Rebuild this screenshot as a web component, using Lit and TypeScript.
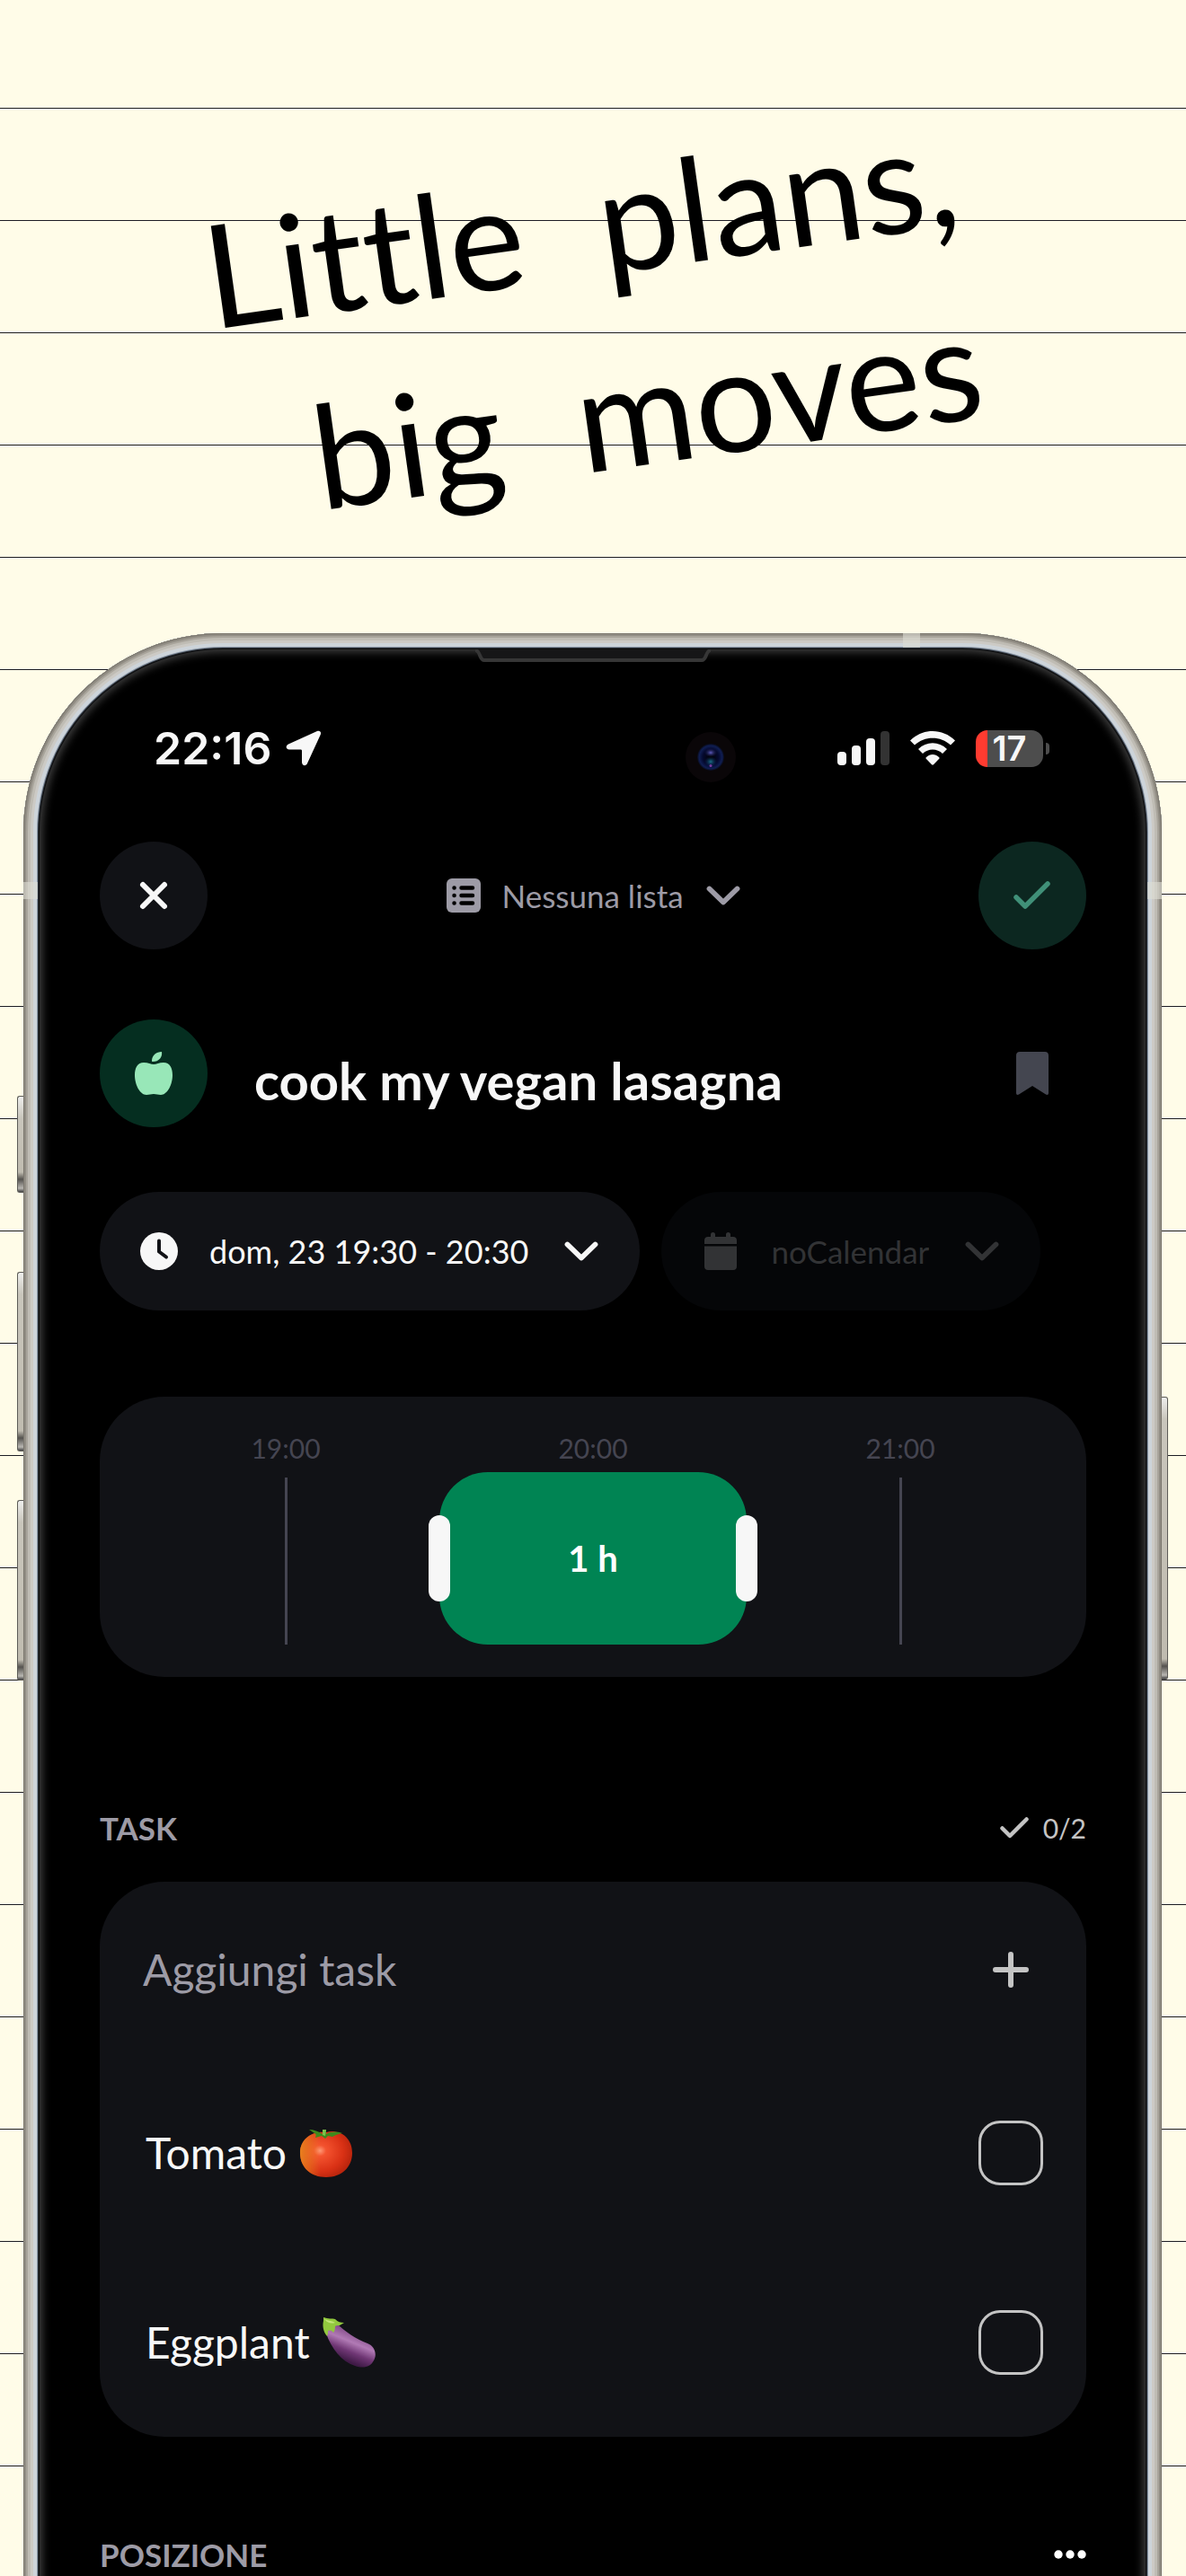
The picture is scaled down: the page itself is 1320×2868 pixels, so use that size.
import { LitElement, css, html, svg } from 'lit';
import { customElement, state } from 'lit/decorators.js';

interface Task {
  id: string;
  label: string;
  picture: 'tomato' | 'eggplant';
  done: boolean;
}

const chevron = html`
  <svg class="chevron" viewBox="0 0 38 22" aria-hidden="true">
    <path d="M3.500 3.500 19 18.500 34.500 3.500" fill="none" stroke="currentColor" stroke-width="5.800" stroke-linecap="round" stroke-linejoin="round" />
  </svg>
`;

const pictures = {
  tomato: svg`
    <defs>
      <radialGradient id="skin" cx=".38" cy=".42" r=".75">
        <stop offset="0" stop-color="#ff9a78" />
        <stop offset=".16" stop-color="#f4532f" />
        <stop offset=".6" stop-color="#d93115" />
        <stop offset="1" stop-color="#a51d08" />
      </radialGradient>
      <linearGradient id="glow" x1="0" x2="1">
        <stop offset="0" stop-color="#e8871e" stop-opacity=".9" />
        <stop offset=".4" stop-color="#e8871e" stop-opacity="0" />
      </linearGradient>
    </defs>
    <path d="M30 5C44 1 59 10 59 28c0 16-12 27-29 27S1 44 1 28C1 12 15 3 30 5Z" fill="url(#skin)" />
    <path d="M30 5C44 1 59 10 59 28c0 16-12 27-29 27S1 44 1 28C1 12 15 3 30 5Z" fill="url(#glow)" />
    <path d="M11 2c5 0 11 2 15 5l1-5h3v5c6-3 12-3 18-1-5 1-8 2-11 4l-5-1-3 3-4-3-7 2c1-3 1-4-1-5Z" fill="#3f8a1c" />
    <path d="M26 2h4l-1 7-3-1Z" fill="#7cc24a" />
  `,
  eggplant: svg`
    <defs>
      <linearGradient id="peel" x1=".7" y1=".2" x2=".4" y2=".85">
        <stop offset="0" stop-color="#7a4380" />
        <stop offset=".4" stop-color="#b17ab5" />
        <stop offset=".7" stop-color="#6f3674" />
        <stop offset="1" stop-color="#3f1a46" />
      </linearGradient>
    </defs>
    <path d="M16 7c9 9 21 17 34 22 8 3 11 12 7 19-4 8-12 9-21 6C21 49 10 35 4 18 3 12 10 4 16 7Z" fill="url(#peel)" />
    <path d="M1 0c5 2 10 1 13 2 3 3 6 4 10 4l-5 3c-3 0-4 0-5 1 0 4-1 6-2 7-2-3-4-3-6-2 0 2 0 4-1 6C0 15 0 8 1 4Z" fill="#92c83e" />
    <path d="M2 2c5 2 9 2 12 4-4 1-8 1-12-4Z" fill="#c3e67a" />
  `,
};

@customElement('app-root')
export class AppRoot extends LitElement {
  static styles = css`
    :host {
      display: block;
      font-family: Lato, 'Open Sans', sans-serif;
      color: #f7f7f7;
    }
    * {
      box-sizing: border-box;
    }
    button,
    input,
    select {
      appearance: none;
      margin: 0;
      padding: 0;
      border: 0;
      background: none;
      color: inherit;
      font: inherit;
      cursor: pointer;
    }
    svg {
      display: block;
      flex: none;
    }
    .page {
      display: flex;
      flex-direction: column;
      min-height: 100vh;
      overflow: hidden;
      background: #fffce8 linear-gradient(#fffce8 120px, #1c1c24 120px, #1c1c24 121px, #fffce8 121px) 0 0 / 100% 125px;
    }

    /* headline */
    .headline {
      display: flex;
      flex-direction: column;
      align-items: center;
      height: 705px;
      margin: 0;
      padding-top: 138px;
      color: #000;
      font: 400 160px/216px Lato, sans-serif;
      font-variant-ligatures: none;
      transform: rotate(-8deg);
    }
    .line {
      display: flex;
      gap: 84px;
    }
    .line + .line {
      padding-left: 90px;
    }

    /* device */
    .device {
      position: relative;
      flex: 1;
      display: flex;
      flex-direction: column;
      margin: 0 27px -40px 26px;
    }
    .side {
      position: absolute;
      right: 100%;
      width: 7px;
      border: 1px solid #5d5c58;
      border-right: 0;
      border-radius: 3px 0 0 3px;
      background: linear-gradient(#eeeeec, #c9c6bc 24px, #c0bcb0 calc(100% - 22px), #55534f calc(100% - 14px), #b9b7b2 calc(100% - 4px), #444);
    }
    .side.action {
      top: 515px;
      height: 108px;
    }
    .side.up {
      top: 711px;
      height: 200px;
    }
    .side.down {
      top: 965px;
      height: 201px;
    }
    .side.power {
      top: 850px;
      right: auto;
      left: 100%;
      height: 315px;
      transform: scaleX(-1);
    }
    .body {
      flex: 1;
      padding: 104px 84px 40px 85px;
      border-radius: 222px 222px 0 0;
      background: #000;
      box-shadow:
        inset 0 0 0 1px #7c786f,
        inset 0 0 0 3px #918d84,
        inset 0 0 0 5px #a8a49b,
        inset 0 0 0 8px #bfbcb4,
        inset 0 0 0 11px #cccac5,
        inset 0 0 0 15px #cdd4da,
        inset 0 0 0 16px #8b98a8,
        inset 0 0 0 17px #2b3037,
        inset 0 0 0 18px #0c0d0f,
        inset 0 0 10px 21px #404040;
    }
    .band {
      position: absolute;
      background: #deded4;
      opacity: 0.6;
    }
    .band.left {
      top: 277px;
      left: 0;
      width: 16px;
      height: 19px;
    }
    .band.right {
      top: 277px;
      right: 0;
      width: 16px;
      height: 19px;
    }
    .band.top {
      top: 0;
      right: 269px;
      width: 19px;
      height: 16px;
    }
    .speaker {
      position: absolute;
      top: 18px;
      left: 50%;
      width: 262px;
      height: 16px;
      margin-left: -131px;
    }
    .camera {
      position: absolute;
      top: 109px;
      left: calc(50% + 102px);
      width: 58px;
      height: 58px;
    }

    /* status bar */
    .status {
      display: flex;
      align-items: center;
      height: 48px;
      padding: 0 48px 0 60px;
      font-family: Inter, sans-serif;
      font-weight: 600;
    }
    .time {
      font-size: 50px;
      line-height: 48px;
    }
    .arrow {
      width: 40px;
      height: 40px;
      margin-left: 16px;
    }
    .signal {
      width: 59px;
      height: 38px;
      margin-left: auto;
    }
    .wifi {
      width: 50px;
      height: 38px;
      margin-left: 22px;
    }
    .battery {
      position: relative;
      display: flex;
      align-items: center;
      justify-content: center;
      width: 75px;
      height: 41px;
      margin-left: 23px;
      border-radius: 13px;
      background: linear-gradient(90deg, #ff3b30 13px, #4d4d4d 13px);
      font-size: 38px;
      line-height: 41px;
    }
    .battery::after {
      content: '';
      position: absolute;
      top: 14px;
      left: calc(100% + 3px);
      width: 4px;
      height: 13px;
      border-radius: 0 4px 4px 0;
      background: #4d4d4d;
    }

    /* header */
    .header {
      display: flex;
      align-items: center;
      justify-content: space-between;
      margin-top: 80px;
    }
    .round {
      display: grid;
      place-items: center;
      flex: none;
      width: 120px;
      height: 120px;
      border-radius: 50%;
      background: #111216;
    }
    .round.confirm {
      background: #0c2720;
      color: #409078;
    }
    .round.food {
      background: #052e20;
      color: #98e7b8;
    }
    .glyph {
      width: 48px;
      height: 48px;
    }
    .picker {
      display: flex;
      align-items: center;
      color: #9d9ba6;
      font-size: 35px;
      line-height: 48px;
    }
    .list {
      width: 38px;
      height: 38px;
      margin-right: 24px;
    }
    .chevron {
      width: 38px;
      height: 22px;
      margin-left: 24px;
    }
    .picker select {
      margin-right: -62px;
      padding-right: 62px;
    }
    .picker .chevron {
      pointer-events: none;
    }

    /* title */
    .title {
      display: flex;
      align-items: center;
      margin-top: 78px;
    }
    .title h1 {
      flex: 1;
      margin: 0;
      padding: 16px 0 0 52px;
      font-size: 58px;
      font-weight: 700;
      line-height: 72px;
    }
    .bookmark {
      margin-right: 36px;
      color: #444650;
    }

    /* pills */
    .pills {
      display: flex;
      gap: 24px;
      margin-top: 72px;
    }
    .pill {
      display: flex;
      align-items: center;
      height: 132px;
      padding: 0 46px 0 44px;
      border-radius: 66px;
      background: #111216;
      color: #f7f7f7;
      font-size: 36px;
      line-height: 48px;
    }
    .pill .glyph {
      width: 44px;
      height: 44px;
      margin-right: 34px;
    }
    .pill .chevron {
      margin-left: 40px;
    }
    .pill.dim {
      background: #050608;
      color: #323335;
      font-size: 35px;
    }
    .pill.dim select {
      margin-right: -78px;
      padding-right: 78px;
    }

    /* timeline */
    .timeline {
      display: grid;
      height: 312px;
      margin-top: 96px;
      padding: 36px;
      border-radius: 72px;
      background: #111216;
    }
    .timeline > * {
      grid-area: 1 / 1;
    }
    .hours {
      display: grid;
      grid-template-columns: repeat(3, 1fr);
      color: #454551;
      font-size: 30px;
      line-height: 42px;
    }
    .hour {
      display: flex;
      flex-direction: column;
      align-items: center;
      gap: 12px;
    }
    .hour::after {
      content: '';
      flex: 1;
      width: 3px;
      background: #454551;
    }
    .range {
      display: grid;
      height: 192px;
      margin: 48px calc(100% / 6 - 12px) 0;
    }
    .range > * {
      grid-area: 1 / 1;
    }
    .slot {
      display: grid;
      place-items: center;
      border-radius: 54px;
      background: #008453;
      color: #fff;
      font-size: 40px;
      font-weight: 700;
    }
    .range input {
      z-index: 1;
      align-self: center;
      width: 100%;
      height: 96px;
      pointer-events: none;
    }
    .range input::-webkit-slider-thumb {
      appearance: none;
      width: 24px;
      height: 96px;
      border-radius: 12px;
      background: #f7f7f7;
      pointer-events: auto;
    }

    /* sections */
    .section {
      display: flex;
      align-items: center;
      justify-content: space-between;
      height: 48px;
      color: #9d9ba6;
    }
    .section h2 {
      margin: 0;
      font-size: 35px;
      font-weight: 700;
      line-height: 48px;
    }
    .section.tasks {
      margin-top: 144px;
    }
    .section.place {
      margin-top: 107px;
    }
    .count {
      display: flex;
      align-items: center;
      gap: 16px;
      color: #c4c4c4;
      font-size: 30px;
    }
    .tick {
      width: 32px;
      height: 24px;
    }
    .more {
      width: 36px;
      height: 12px;
      color: #fff;
    }
    .card {
      margin-top: 36px;
      padding: 0 48px;
      border-radius: 72px;
      background: #111216;
      font-size: 48px;
      line-height: 60px;
    }
    .row {
      display: flex;
      align-items: center;
      justify-content: space-between;
      height: 211px;
    }
    .row.add {
      height: 196px;
    }
    .row.add input {
      flex: 1;
      min-width: 0;
      cursor: text;
    }
    .row.add input::placeholder {
      color: #9d9ba6;
      opacity: 1;
    }
    .plus {
      width: 72px;
      color: #c4c4c4;
    }
    .plus svg {
      width: 40px;
      height: 40px;
      margin: 0 auto;
    }
    .name {
      display: flex;
      align-items: center;
      gap: 14px;
      padding-left: 3px;
    }
    .picture {
      width: 60px;
      height: 56px;
    }
    .box {
      width: 72px;
      height: 72px;
      border: 3px solid #c4c4c4;
      border-radius: 24px;
    }
    .box:checked {
      background: #008453;
    }
  `;

  @state() private _start = 30;
  @state() private _end = 90;
  @state() private _tasks: Task[] = [
    { id: 'tomato', label: 'Tomato', picture: 'tomato', done: false },
    { id: 'eggplant', label: 'Eggplant', picture: 'eggplant', done: false },
  ];

  private _toggle(id: string) {
    this._tasks = this._tasks.map(t => (t.id === id ? { ...t, done: !t.done } : t));
  }

  private _onStart = (e: Event) => {
    this._start = Number((e.target as HTMLInputElement).value);
  };

  private _onEnd = (e: Event) => {
    this._end = Number((e.target as HTMLInputElement).value);
  };

  // offset along the range, whose ends reach half a handle past the hours
  private _at(minutes: number) {
    return `calc(12px + (100% - 24px) * ${minutes / 120})`;
  }

  private _renderStatus() {
    return html`
      <div class="status">
        <span class="time">22:16</span>
        <svg class="arrow" viewBox="0 0 40 40" aria-hidden="true">
          <path d="M35 1 3 15.500C-.5 17.500 0 21.500 4 21.500h12.500c1 0 1.500.5 1.500 1.500v12.500c0 4 4.500 5 6 1.500L38.700 5C40 2 38 0 35 1Z" fill="currentColor" />
        </svg>
        <svg class="signal" viewBox="0 0 59 38" fill="currentColor" aria-hidden="true">
          <rect y="23" width="10" height="15" rx="4" />
          <rect x="16" y="16" width="10" height="22" rx="4" />
          <rect x="32" y="8" width="10" height="30" rx="4" />
          <rect x="48" width="10" height="38" rx="4" fill="#333" />
        </svg>
        <svg class="wifi" viewBox="0 0 50 38" fill="currentColor" aria-hidden="true">
          <path d="M0 10.500C14-3.500 36-3.500 50 10.500l-5 5C34 5 16 5 5 15.500Z" />
          <path d="M9 20c9-9 23-9 32 0l-5 5c-6-6-16-6-22 0Z" />
          <path d="M18 29c4-4 10-4 14 0 .8.800.8 1 0 2l-6 6.300c-.7.600-1.300.6-2 0L18 31c-.8-1-.8-1.200 0-2Z" />
        </svg>
        <span class="battery">17</span>
      </div>
    `;
  }

  private _renderHeader() {
    return html`
      <header class="header">
        <button class="round" aria-label="Chiudi">
          <svg class="glyph" viewBox="0 0 48 48" aria-hidden="true">
            <path d="m12 12 24 24m0-24L12 36" stroke="currentColor" stroke-width="6" stroke-linecap="round" />
          </svg>
        </button>
        <label class="picker">
          <svg class="list" viewBox="0 0 38 38" aria-hidden="true">
            <rect width="38" height="38" rx="6" fill="currentColor" />
            <path d="M16.500 10.500H29M16.500 19H29M16.500 27.500H29M8.500 10.500h.1m-.1 8.500h.1m-.1 8.500h.1" stroke="#000" stroke-width="4.500" stroke-linecap="round" />
          </svg>
          <select aria-label="Lista">
            <option>Nessuna lista</option>
          </select>
          ${chevron}
        </label>
        <button class="round confirm" aria-label="Salva">
          <svg class="glyph" viewBox="0 0 48 48" aria-hidden="true">
            <path d="m6 26 10 10 25-25" fill="none" stroke="currentColor" stroke-width="5.500" stroke-linecap="round" stroke-linejoin="round" />
          </svg>
        </button>
      </header>
    `;
  }

  private _renderTitle() {
    return html`
      <div class="title">
        <button class="round food" aria-label="Icona">
          <svg class="glyph" viewBox="0 0 48 48" fill="currentColor" aria-hidden="true">
            <path d="M24 14c3 0 6-2 11-2 7 0 10 6 10 14 0 11-6 22-13 22-3 0-5-1-8-1s-5 1-8 1C9 48 3 37 3 26c0-8 3-14 10-14 5 0 8 2 11 2Z" />
            <path d="M22 10C22 4 27 0 33 0c1 6-3 11-10 11-.7 0-1-.3-1-1Z" />
          </svg>
        </button>
        <h1>cook my vegan lasagna</h1>
        <button class="bookmark" aria-label="Salva nei preferiti">
          <svg class="glyph" viewBox="0 0 48 48" aria-hidden="true">
            <path d="M10 0h28c2.500 0 4 1.500 4 4v42c0 2-1.500 2.500-3 1.500L24 38 9 47.500C7.500 48.500 6 48 6 46V4c0-2.500 1.500-4 4-4Z" fill="currentColor" />
          </svg>
        </button>
      </div>
    `;
  }

  private _renderPills() {
    return html`
      <div class="pills">
        <button class="pill">
          <svg class="glyph" viewBox="0 0 44 44" aria-hidden="true">
            <circle cx="22" cy="22" r="21" fill="currentColor" />
            <path d="M22 10.500V22.500l8 6" fill="none" stroke="#111216" stroke-width="4" stroke-linecap="round" stroke-linejoin="round" />
          </svg>
          <span>dom, 23 19:30 - 20:30</span>
          ${chevron}
        </button>
        <label class="pill dim">
          <svg class="glyph" viewBox="0 0 44 44" fill="currentColor" aria-hidden="true">
            <path d="M4 14V10c0-2.500 1.500-4 4-4h3V3.500a2.500 2.500 0 0 1 5 0V6h12V3.500a2.500 2.500 0 0 1 5 0V6h3c2.500 0 4 1.500 4 4v4Z" />
            <path d="M4 16.500h36V39c0 2.500-1.500 4-4 4H8c-2.500 0-4-1.500-4-4Z" />
          </svg>
          <select aria-label="Calendario">
            <option>noCalendar</option>
          </select>
          ${chevron}
        </label>
      </div>
    `;
  }

  private _renderTimeline() {
    return html`
      <div class="timeline">
        <div class="hours">
          ${['19:00', '20:00', '21:00'].map(h => html`<div class="hour">${h}</div>`)}
        </div>
        <div class="range">
          <div
            class="slot"
            style="margin-left: ${this._at(this._start)}; margin-right: ${this._at(120 - this._end)}"
          >
            ${(this._end - this._start) / 60} h
          </div>
          <input type="range" aria-label="Inizio" min="0" max="120" step="15" .value=${String(this._start)} @input=${this._onStart} />
          <input type="range" aria-label="Fine" min="0" max="120" step="15" .value=${String(this._end)} @input=${this._onEnd} />
        </div>
      </div>
    `;
  }

  private _renderTasks() {
    const done = this._tasks.filter(t => t.done).length;
    return html`
      <div class="section tasks">
        <h2>TASK</h2>
        <span class="count">
          <svg class="tick" viewBox="0 0 32 24" aria-hidden="true">
            <path d="m2.500 12.500 8.500 8.500L29.500 2.500" fill="none" stroke="currentColor" stroke-width="4.500" stroke-linecap="round" stroke-linejoin="round" />
          </svg>
          ${done}/${this._tasks.length}
        </span>
      </div>
      <div class="card">
        <div class="row add">
          <input type="text" aria-label="Aggiungi task" placeholder="Aggiungi task" />
          <button class="plus" aria-label="Aggiungi">
            <svg viewBox="0 0 40 40" aria-hidden="true">
              <path d="M20 3v34M3 20h34" stroke="currentColor" stroke-width="6" stroke-linecap="round" />
            </svg>
          </button>
        </div>
        ${this._tasks.map(
          t => html`
            <div class="row">
              <label class="name" for=${t.id}>
                ${t.label}
                <svg class="picture" viewBox="0 0 60 56" aria-hidden="true">${pictures[t.picture]}</svg>
              </label>
              <input class="box" type="checkbox" id=${t.id} .checked=${t.done} @change=${() => this._toggle(t.id)} />
            </div>
          `,
        )}
      </div>
    `;
  }

  render() {
    return html`
      <div class="page">
        <h1 class="headline">
          <span class="line"><span>Little</span> <span>plans,</span></span>
          <span class="line"><span>big</span> <span>moves</span></span>
        </h1>
        <div class="device">
          <i class="side action"></i>
          <i class="side up"></i>
          <i class="side down"></i>
          <i class="side power"></i>
          <main class="body">
            ${this._renderStatus()} ${this._renderHeader()} ${this._renderTitle()} ${this._renderPills()}
            ${this._renderTimeline()} ${this._renderTasks()}
            <div class="section place">
              <h2>POSIZIONE</h2>
              <button class="more" aria-label="Altro">
                <svg viewBox="0 0 36 12" fill="currentColor" aria-hidden="true">
                  <circle cx="5" cy="6" r="4.700" />
                  <circle cx="18" cy="6" r="4.700" />
                  <circle cx="31" cy="6" r="4.700" />
                </svg>
              </button>
            </div>
          </main>
          <i class="band left"></i>
          <i class="band right"></i>
          <i class="band top"></i>
          <svg class="speaker" viewBox="0 0 262 16" aria-hidden="true">
            <path d="M0 0h262l-8 12H8Z" fill="#161617" />
            <path d="M0 1c6 0 4 11 10 11h242c6 0 4-11 10-11" fill="none" stroke="#363636" stroke-width="4" />
          </svg>
          <svg class="camera" viewBox="0 0 58 58" aria-hidden="true">
            <defs>
              <radialGradient id="lens">
                <stop offset="0" stop-color="#000" />
                <stop offset=".6" stop-color="#050a30" />
                <stop offset=".85" stop-color="#101e52" />
                <stop offset="1" stop-color="#080a18" />
              </radialGradient>
              <radialGradient id="glint">
                <stop offset="0" stop-color="#5f5cc0" />
                <stop offset="1" stop-color="#1a1c50" stop-opacity="0" />
              </radialGradient>
              <radialGradient id="coating">
                <stop offset="0" stop-color="#1a7088" />
                <stop offset="1" stop-color="#0a2050" stop-opacity="0" />
              </radialGradient>
            </defs>
            <circle cx="29" cy="29" r="28" fill="#0a0608" />
            <circle cx="29" cy="29" r="15" fill="url(#lens)" />
            <ellipse cx="29" cy="24" rx="7" ry="5" fill="url(#glint)" />
            <ellipse cx="29" cy="34" rx="7" ry="6" fill="url(#coating)" />
            <circle cx="29" cy="38.500" r="1.500" fill="#7a3aa0" />
          </svg>
        </div>
      </div>
    `;
  }
}

declare global {
  interface HTMLElementTagNameMap {
    'app-root': AppRoot;
  }
}
